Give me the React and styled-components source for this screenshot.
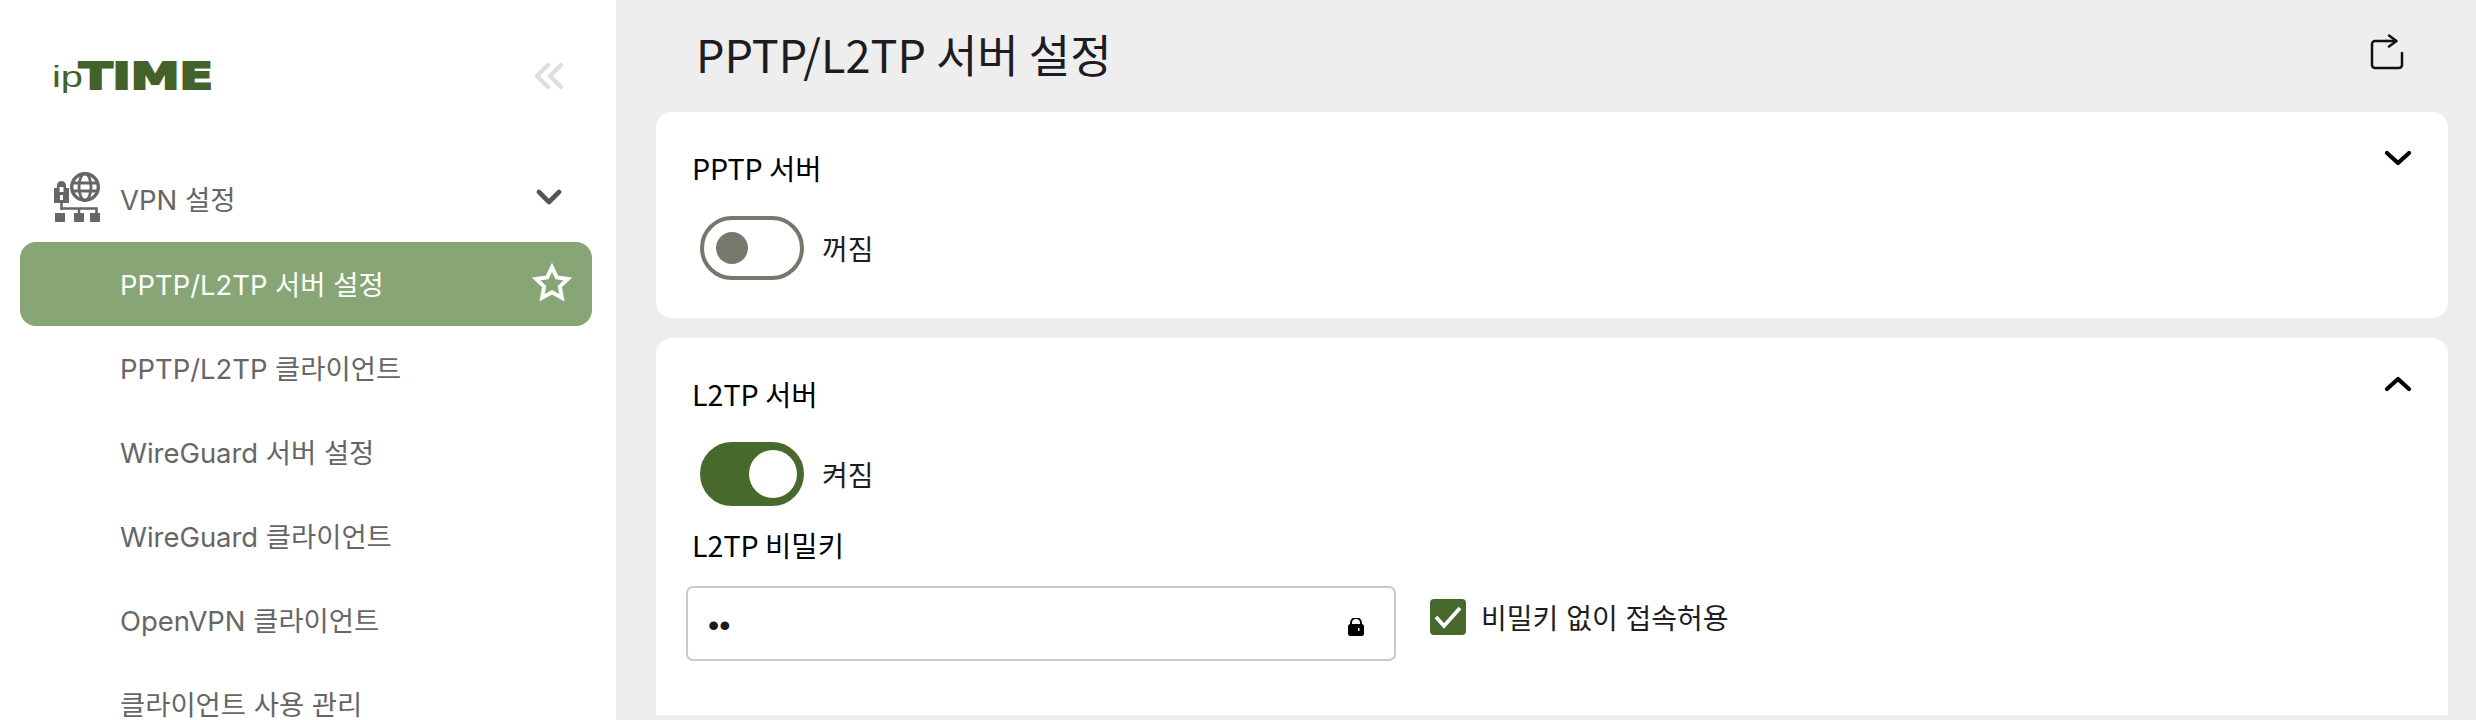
import React from "react";
import styled, { createGlobalStyle } from "styled-components";

const Global = createGlobalStyle`
  html, body { margin: 0; padding: 0; height: 720px; overflow: hidden; background: #eeeeee; }
  * { box-sizing: border-box; }
  #root { height: 720px; }
`;

const Page = styled.div`
  display: flex; width: 2476px; height: 720px; overflow: hidden; background: #eeeeee;
  font-family: "Noto Sans CJK KR", sans-serif;
`;
const Sidebar = styled.aside`
  flex: 0 0 616px; height: 720px; overflow: hidden; background: #fff; padding: 0 24px 0 20px;
  font-family: Inter, "Noto Sans CJK KR", sans-serif;
`;
const LogoRow = styled.div`
  display: flex; justify-content: space-between; height: 96px; margin-top: 56px;
  padding: 0 28px 0 30px; align-items: flex-start;
`;
const LogoMark = styled.svg`display: block; margin-top: 2px; overflow: visible;`;
const Collapse = styled.svg`display: block; margin-top: 6px;`;
const GroupRow = styled.div`
  display: flex; align-items: center; height: 90px; color: #666; font-size: 27.5px; padding: 0 30px 0 32px; gap: 20px;
`;
const GroupLabel = styled.span`flex: 1; position: relative; top: 1px;`;
const NavList = styled.div`display: flex; flex-direction: column;`;
const NavItem = styled.div`
  display: flex; align-items: center; justify-content: space-between; height: 84px;
  padding: 0 20px 3px 100px; border-radius: 16px; font-size: 27.4px;
  color: ${p => (p.$active ? "#fff" : "#666")};
  background: ${p => (p.$active ? "#88a575" : "transparent")};
`;
const Main = styled.main`flex: 1; min-width: 0; padding: 0 28px 0 40px; display: flex; flex-direction: column; gap: 20px;`;
const Header = styled.header`
  flex: 0 0 92px; display: flex; align-items: flex-start; justify-content: space-between; padding: 0 44px 0 40px;
`;
const Title = styled.h1`margin: 23px 0 0; font-size: 45px; line-height: 62px; font-weight: 400; color: #1c1c22;`;
const ShareBtn = styled.svg`display: block; margin-top: 34px;`;
const Card = styled.section`
  flex: none; background: #fff; border-radius: ${p => (p.$open ? "16px 16px 0 0" : "16px")};
  padding: 36px 36px ${p => p.$bottom}px 36px;
`;
const CardHead = styled.div`display: flex; justify-content: space-between; align-items: flex-start;`;
const Label = styled.div`font-size: 28.6px; line-height: 40px; color: #000; margin-top: ${p => p.$top || 0}px;`;
const Chevron = styled.svg`display: block; margin-top: 1px;`;
const ToggleRow = styled.div`display: flex; align-items: center; gap: 18px; margin: 28px 0 0 8px; font-size: 28px; color: #1c1c22;`;
const Track = styled.div`
  width: 104px; height: 64px; border-radius: 32px; display: flex; align-items: center;
  border: 4px solid ${p => (p.$on ? "#476a2c" : "#75796c")};
  background: ${p => (p.$on ? "#476a2c" : "#fff")};
  justify-content: ${p => (p.$on ? "flex-end" : "flex-start")};
  padding: ${p => (p.$on ? "0 3px" : "0 12px")};
`;
const Knob = styled.div`
  width: ${p => (p.$on ? 48 : 32)}px; height: ${p => (p.$on ? 48 : 32)}px; border-radius: 50%;
  background: ${p => (p.$on ? "#fff" : "#75796c")};
`;
const FieldRow = styled.div`display: flex; align-items: center; margin: 21px 0 0 -6px; gap: 34px;`;
const Field = styled.div`
  width: 710px; height: 75px; border: 2px solid #c9c9c9; border-radius: 7px; display: flex; align-items: center;
  padding: 0 30px 0 20px; background: #fff;
`;
const Secret = styled.input`
  flex: 1; min-width: 0; border: 0; outline: 0; padding: 0; margin-top: 4px; background: transparent; font-size: 32px;
  color: #1c1c22; font-family: "Liberation Sans", sans-serif; letter-spacing: 0;
`;
const LockIcon = styled.svg`display: block; margin-top: 6px;`;
const CheckLabel = styled.div`display: flex; align-items: center; gap: 15px; font-size: 28px; color: #1c1c22; margin-top: -14px; font-family: Inter, "Noto Sans CJK KR", sans-serif;`;
const CheckBox = styled.div`
  width: 36px; height: 36px; border-radius: 4px; background: #476a2c; display: flex; align-items: center; justify-content: center;
`;

const Down = ({ up }) => (
  <Chevron width="28" height="18" viewBox="0 0 28 18" fill="none">
    <path d={up ? "M3 14 L14 4 L25 14" : "M3 4 L14 14 L25 4"} stroke="#000" strokeWidth="4.2" strokeLinecap="round" strokeLinejoin="round" />
  </Chevron>
);

const NetIcon = () => (
  <svg width="48" height="50" viewBox="0 0 48 50" fill="#666">
    <circle cx="33" cy="15" r="13.300" fill="none" stroke="#666" strokeWidth="3.400" />
    <ellipse cx="33" cy="15" rx="6" ry="13.500" fill="none" stroke="#666" strokeWidth="2.800" />
    <path d="M20 11h26M20 19h26" stroke="#666" strokeWidth="2.800" />
    <path d="M2 16h3v-2.500a4.500 4.500 0 0 1 9 0V16h3v15H2z" />
    <rect x="7.500" y="15" width="4" height="5" fill="#fff" />
    <rect x="8" y="23" width="3" height="5" fill="#fff" />
    <path d="M9.500 31v7M9.500 36.500h35V42M27 36.500V42" stroke="#666" strokeWidth="2.600" fill="none" />
    <rect x="3" y="41" width="10" height="9" /><rect x="22" y="41" width="10" height="9" /><rect x="38" y="41" width="10" height="9" />
  </svg>
);

const navItems = ["PPTP/L2TP 클라이언트", "WireGuard 서버 설정", "WireGuard 클라이언트", "OpenVPN 클라이언트", "클라이언트 사용 관리"];

export default function App() {
  return (
    <Page>
      <Global />
      <Sidebar>
        <LogoRow>
          <LogoMark width="164" height="38" viewBox="0 0 164 38">
            <text x="2" y="29" fontFamily="'Liberation Sans', sans-serif" fontSize="30" fill="#43622a" textLength="31" lengthAdjust="spacingAndGlyphs">ip</text>
            <text x="29" y="31" fontFamily="'DejaVu Sans', sans-serif" fontWeight="700" fontSize="38" fill="#43622a" stroke="#43622a" strokeWidth="2.200" textLength="134" lengthAdjust="spacingAndGlyphs">TIME</text>
          </LogoMark>
          <Collapse width="30" height="28" viewBox="0 0 30 28" fill="none">
            <path d="M14 3 L3 14 L14 25 M27 3 L16 14 L27 25" stroke="#dedede" strokeWidth="4.400" strokeLinecap="round" strokeLinejoin="round" />
          </Collapse>
        </LogoRow>
        <GroupRow>
          <NetIcon />
          <GroupLabel>VPN 설정</GroupLabel>
          <svg width="26" height="16" viewBox="0 0 26 16" fill="none">
            <path d="M3 3 L13 13 L23 3" stroke="#555" strokeWidth="4.600" strokeLinecap="round" strokeLinejoin="round" />
          </svg>
        </GroupRow>
        <NavList>
          <NavItem $active>
            PPTP/L2TP 서버 설정
            <svg width="40" height="40" viewBox="0 0 24 24" fill="none">
              <path d="M12 2.600l2.900 6.100 6.600.9-4.800 4.600 1.200 6.600L12 17.600l-5.900 3.200 1.200-6.600L2.500 9.600l6.600-.9z" stroke="#fff" strokeWidth="2.400" strokeLinejoin="miter" />
            </svg>
          </NavItem>
          {navItems.map(t => <NavItem key={t}>{t}</NavItem>)}
        </NavList>
      </Sidebar>
      <Main>
        <Header>
          <Title>PPTP/L2TP 서버 설정</Title>
          <ShareBtn width="34" height="36" viewBox="0 0 34 36" fill="none" stroke="#111" strokeWidth="2.500" strokeLinecap="round" strokeLinejoin="round">
            <path d="M17 7 H5 a3 3 0 0 0 -3 3 V31 a3 3 0 0 0 3 3 H29 a3 3 0 0 0 3 -3 V19" />
            <path d="M16 7 H26" />
            <path d="M19 1.500 L26.500 7 L19 12.500" />
          </ShareBtn>
        </Header>
        <Card $bottom={38}>
          <CardHead><Label>PPTP 서버</Label><Down /></CardHead>
          <ToggleRow><Track><Knob /></Track>꺼짐</ToggleRow>
        </Card>
        <Card $bottom={54} $open>
          <CardHead><Label>L2TP 서버</Label><Down up /></CardHead>
          <ToggleRow><Track $on><Knob $on /></Track>켜짐</ToggleRow>
          <Label $top={19}>L2TP 비밀키</Label>
          <FieldRow>
            <Field>
              <Secret type="password" value="ab" readOnly />
              <LockIcon width="16" height="18" viewBox="0 0 16 18">
                <path d="M3 7V5a5 5 0 0 1 10 0v2" fill="none" stroke="#000" strokeWidth="2" />
                <rect x="0" y="6" width="16" height="12" rx="2.500" fill="#000" />
                <rect x="10" y="10" width="1.500" height="3" fill="#fff" />
              </LockIcon>
            </Field>
            <CheckLabel>
              <CheckBox>
                <svg width="30" height="28" viewBox="0 0 30 28" fill="none">
                  <path d="M3 14 L11 23 L27 5" stroke="#fff" strokeWidth="3.800" />
                </svg>
              </CheckBox>
              비밀키 없이 접속허용
            </CheckLabel>
          </FieldRow>
        </Card>
      </Main>
    </Page>
  );
}
